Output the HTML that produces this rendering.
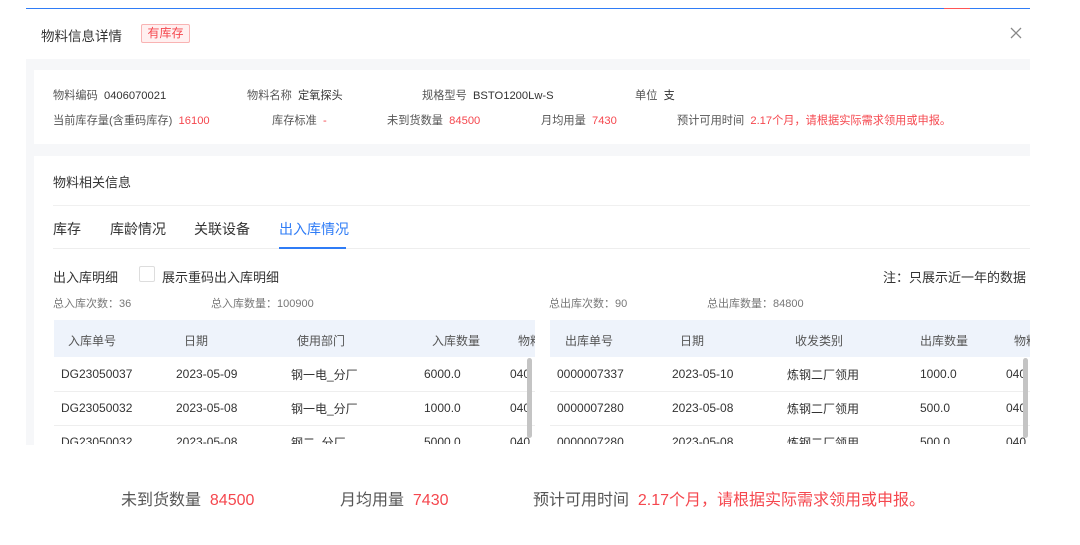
<!DOCTYPE html>
<html><head><meta charset="utf-8"><style>
*{margin:0;padding:0;box-sizing:border-box}
body{width:1080px;height:545px;background:#fff;font-family:"Liberation Sans","Noto Sans CJK SC",sans-serif;color:#333;position:relative;overflow:hidden;font-size:12px}
.a{position:absolute;white-space:nowrap}
.r{color:#f5474e}
.g{color:#555}
.m{color:#777}
.i{font-size:11.2px}
</style></head><body>
<div class="a" style="left:26px;top:8px;width:1004px;height:1px;background:#2f7cf6"></div>
<div class="a" style="left:944px;top:8px;width:26px;height:1px;background:#f55"></div>
<div class="a" style="left:41px;top:25px;font-size:13.5px;color:#333">物料信息详情</div>
<div class="a" style="left:141px;top:24px;width:49px;height:19px;border:1px solid #f9b3b3;background:#fff0f0;color:#f5474e;font-size:12px;line-height:17px;text-align:center;border-radius:2px">有库存</div>
<svg class="a" style="left:1010px;top:27px" width="12" height="12" viewBox="0 0 12 12"><path d="M1 1L11 11M11 1L1 11" stroke="#888" stroke-width="1.3"/></svg>
<div class="a" style="left:26px;top:59px;width:1004px;height:386px;background:#f6f7f9"></div>
<div class="a" style="left:34px;top:70px;width:996px;height:74px;background:#fff"></div>
<div class="a" style="left:34px;top:156px;width:996px;height:290px;background:#fff"></div>
<div class="a g i" style="left:53px;top:87px">物料编码&nbsp; <span style="color:#333">0406070021</span></div>
<div class="a g i" style="left:247px;top:87px">物料名称&nbsp; <span style="color:#333">定氧探头</span></div>
<div class="a g i" style="left:422px;top:87px">规格型号&nbsp; <span style="color:#333">BSTO1200Lw-S</span></div>
<div class="a g i" style="left:635px;top:87px">单位&nbsp; <span style="color:#333">支</span></div>
<div class="a g i" style="left:53px;top:112px">当前库存量(含重码库存)&nbsp; <span class="r">16100</span></div>
<div class="a g i" style="left:272px;top:112px">库存标准&nbsp; <span class="r">-</span></div>
<div class="a g i" style="left:387px;top:112px">未到货数量&nbsp; <span class="r">84500</span></div>
<div class="a g i" style="left:541px;top:112px">月均用量&nbsp; <span class="r">7430</span></div>
<div class="a g i" style="left:677px;top:112px">预计可用时间&nbsp; <span class="r">2.17个月，请根据实际需求领用或申报。</span></div>
<div class="a" style="left:53px;top:172px;font-size:13px">物料相关信息</div>
<div class="a" style="left:53px;top:205px;width:977px;height:1px;background:#f0f0f0"></div>
<div class="a" style="left:53px;top:219px;font-size:14px">库存</div>
<div class="a" style="left:110px;top:219px;font-size:14px">库龄情况</div>
<div class="a" style="left:194px;top:219px;font-size:14px">关联设备</div>
<div class="a" style="left:279px;top:219px;font-size:14px;color:#2f7cf6">出入库情况</div>
<div class="a" style="left:53px;top:248px;width:977px;height:1px;background:#eee"></div>
<div class="a" style="left:279px;top:247px;width:67px;height:2px;background:#2f7cf6"></div>
<div class="a" style="left:53px;top:267px;font-size:13px">出入库明细</div>
<div class="a" style="left:139px;top:266px;width:16px;height:16px;border:1px solid #ddd;border-radius:2px"></div>
<div class="a" style="left:162px;top:267px;font-size:13px">展示重码出入库明细</div>
<div class="a" style="left:883px;top:267px;font-size:13px">注：只展示近一年的数据</div>
<div class="a m" style="left:53px;top:295px;font-size:11px">总入库次数：36</div>
<div class="a m" style="left:211px;top:295px;font-size:11px">总入库数量：100900</div>
<div class="a m" style="left:549px;top:295px;font-size:11px">总出库次数：90</div>
<div class="a m" style="left:707px;top:295px;font-size:11px">总出库数量：84800</div>
<div class="a" style="left:54px;top:320px;width:481px;height:124px;overflow:hidden">
<div class="a" style="left:0;top:0;width:481px;height:37px;background:#eef3fb"></div>
<div class="a g" style="left:14px;top:12px">入库单号</div><div class="a g" style="left:130px;top:12px">日期</div><div class="a g" style="left:243px;top:12px">使用部门</div><div class="a g" style="left:378px;top:12px">入库数量</div><div class="a g" style="left:464px;top:12px">物料</div>
<div class="a" style="left:0;top:71px;width:481px;height:1px;background:#eee"></div>
<div class="a" style="left:0;top:105px;width:481px;height:1px;background:#eee"></div>
<div class="a" style="left:7px;top:47px">DG23050037</div><div class="a" style="left:122px;top:47px">2023-05-09</div><div class="a" style="left:237px;top:46px">钢一电_分厂</div><div class="a" style="left:370px;top:47px">6000.0</div><div class="a" style="left:456px;top:47px">040</div>
<div class="a" style="left:7px;top:81px">DG23050032</div><div class="a" style="left:122px;top:81px">2023-05-08</div><div class="a" style="left:237px;top:80px">钢一电_分厂</div><div class="a" style="left:370px;top:81px">1000.0</div><div class="a" style="left:456px;top:81px">040</div>
<div class="a" style="left:7px;top:115px">DG23050032</div><div class="a" style="left:122px;top:115px">2023-05-08</div><div class="a" style="left:237px;top:114px">钢二_分厂</div><div class="a" style="left:370px;top:115px">5000.0</div><div class="a" style="left:456px;top:115px">040</div>
<div class="a" style="left:473px;top:38px;width:5px;height:80px;background:#c4c4c4;border-radius:3px"></div>
</div>
<div class="a" style="left:550px;top:320px;width:480px;height:124px;overflow:hidden">
<div class="a" style="left:0;top:0;width:480px;height:37px;background:#eef3fb"></div>
<div class="a g" style="left:15px;top:12px">出库单号</div><div class="a g" style="left:130px;top:12px">日期</div><div class="a g" style="left:245px;top:12px">收发类别</div><div class="a g" style="left:370px;top:12px">出库数量</div><div class="a g" style="left:464px;top:12px">物料</div>
<div class="a" style="left:0;top:71px;width:480px;height:1px;background:#eee"></div>
<div class="a" style="left:0;top:105px;width:480px;height:1px;background:#eee"></div>
<div class="a" style="left:7px;top:47px">0000007337</div><div class="a" style="left:122px;top:47px">2023-05-10</div><div class="a" style="left:237px;top:46px">炼钢二厂领用</div><div class="a" style="left:370px;top:47px">1000.0</div><div class="a" style="left:456px;top:47px">040</div>
<div class="a" style="left:7px;top:81px">0000007280</div><div class="a" style="left:122px;top:81px">2023-05-08</div><div class="a" style="left:237px;top:80px">炼钢二厂领用</div><div class="a" style="left:370px;top:81px">500.0</div><div class="a" style="left:456px;top:81px">040</div>
<div class="a" style="left:7px;top:115px">0000007280</div><div class="a" style="left:122px;top:115px">2023-05-08</div><div class="a" style="left:237px;top:114px">炼钢二厂领用</div><div class="a" style="left:370px;top:115px">500.0</div><div class="a" style="left:456px;top:115px">040</div>
<div class="a" style="left:473px;top:38px;width:5px;height:80px;background:#c4c4c4;border-radius:3px"></div>
</div>
<div class="a" style="left:0;top:445px;width:1080px;height:100px;background:#fff"></div>
<div class="a g" style="left:121px;top:486px;font-size:16px">未到货数量&nbsp; <span class="r">84500</span></div>
<div class="a g" style="left:340px;top:486px;font-size:16px">月均用量&nbsp; <span class="r">7430</span></div>
<div class="a g" style="left:533px;top:486px;font-size:16px">预计可用时间&nbsp; <span class="r">2.17个月，请根据实际需求领用或申报。</span></div>
</body></html>
